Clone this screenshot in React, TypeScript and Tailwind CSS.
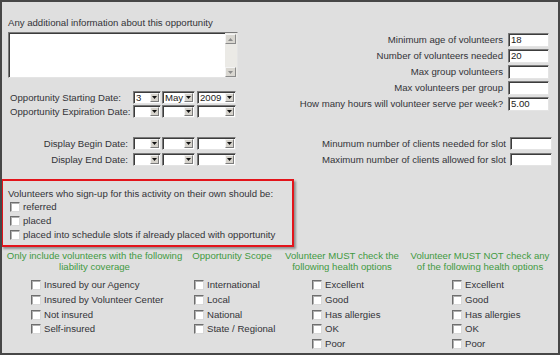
import React from "react";

function Check() {
  return (
    <span className="inline-block w-[10px] h-[10px] shrink-0 bg-white border border-t-[#6e6e6e] border-l-[#6e6e6e] border-r-[#d8d8d8] border-b-[#d8d8d8] shadow-[inset_1px_1px_0_#b0b0b0]" />
  );
}

function CheckRow({ label, tall }: { label: string; tall?: boolean }) {
  return (
    <div className={tall ? "flex items-center h-[14.7px]" : "flex items-center h-[14px]"}>
      <Check />
      <span className="ml-[3px] whitespace-nowrap">{label}</span>
    </div>
  );
}

function TextInput({ value, cls }: { value?: string; cls: string }) {
  return (
    <div
      className={`${cls} bg-white border border-t-[#7a7a7a] border-l-[#7a7a7a] border-r-[#e4e4e4] border-b-[#e4e4e4] shadow-[inset_1px_1px_0_#3c3c3c] pl-[2px] flex items-center text-[#222] leading-none`}
    >
      {value}
    </div>
  );
}

function Arrow({ up }: { up?: boolean }) {
  return (
    <svg width="5" height="3" viewBox="0 0 5 3">
      {up ? <polygon points="0,3 5,3 2.5,0" fill="currentColor" /> : <polygon points="0,0 5,0 2.5,3" fill="currentColor" />}
    </svg>
  );
}

function Select({ value, cls }: { value?: string; cls: string }) {
  return (
    <div
      className={`${cls} h-[13px] bg-white border border-t-[#7a7a7a] border-l-[#7a7a7a] border-r-[#e4e4e4] border-b-[#e4e4e4] shadow-[inset_1px_1px_0_#3c3c3c] flex items-center justify-between pl-[2px] pr-[1px]`}
    >
      <span className="leading-none text-[#222]">{value}</span>
      <span className="w-[9px] h-[9px] bg-[#d6d3cc] border border-t-[#f4f4f4] border-l-[#f4f4f4] border-r-[#7c7c7c] border-b-[#7c7c7c] flex items-center justify-center text-[#111]">
        <Arrow />
      </span>
    </div>
  );
}

export default function App() {
  return (
    <div className="w-[560px] h-[355px] border-2 border-[#474747] bg-[#dfdfdf] text-[9.6px] leading-[12px] text-[#333338] overflow-hidden font-['Liberation_Sans',Arial,sans-serif]">
      {/* top area */}
      <div className="flex">
        {/* left column */}
        <div className="w-[236px] pl-[6px] pt-[15px] flex flex-col">
          <div className="h-[12px] whitespace-nowrap">Any additional information about this opportunity</div>
          <div className="mt-[3px] w-[230px] h-[46px] bg-white border border-t-[#7a7a7a] border-l-[#7a7a7a] border-r-[#e4e4e4] border-b-[#e4e4e4] shadow-[inset_1px_1px_0_#3c3c3c] flex justify-end">
            <div className="w-[12px] h-full bg-[#ebeae6] flex flex-col justify-between pt-[1px]">
              <span className="w-[11px] h-[10px] bg-[#d9d7d1] border border-t-[#f4f4f4] border-l-[#f4f4f4] border-r-[#8a8a8a] border-b-[#8a8a8a] flex items-center justify-center text-[#8c8c8c]">
                <Arrow up />
              </span>
              <span className="w-[11px] h-[10px] bg-[#d9d7d1] border border-t-[#f4f4f4] border-l-[#f4f4f4] border-r-[#8a8a8a] border-b-[#8a8a8a] flex items-center justify-center text-[#8c8c8c]">
                <Arrow />
              </span>
            </div>
          </div>

          <div className="mt-[13px] flex flex-col gap-[1px]">
            <div className="flex items-center h-[13px]">
              <span className="w-[125px] pl-[2px] whitespace-nowrap">Opportunity Starting Date:</span>
              <Select value="3" cls="w-[28px]" />
              <Select value="May" cls="w-[33px] ml-[1px]" />
              <Select value="2009" cls="w-[39px] ml-[2px]" />
            </div>
            <div className="flex items-center h-[13px]">
              <span className="w-[125px] pl-[2px] whitespace-nowrap">Opportunity Expiration Date:</span>
              <Select cls="w-[28px]" />
              <Select cls="w-[33px] ml-[1px]" />
              <Select cls="w-[39px] ml-[2px]" />
            </div>
          </div>

          <div className="mt-[19px] flex flex-col gap-[3px]">
            <div className="flex items-center h-[13px]">
              <span className="w-[125px] pr-[5px] text-right whitespace-nowrap">Display Begin Date:</span>
              <Select cls="w-[28px]" />
              <Select cls="w-[33px] ml-[1px]" />
              <Select cls="w-[39px] ml-[2px]" />
            </div>
            <div className="flex items-center h-[13px]">
              <span className="w-[125px] pr-[5px] text-right whitespace-nowrap">Display End Date:</span>
              <Select cls="w-[28px]" />
              <Select cls="w-[33px] ml-[1px]" />
              <Select cls="w-[39px] ml-[2px]" />
            </div>
          </div>
        </div>

        {/* right column */}
        <div className="flex-1 flex flex-col items-end pt-[31px] pr-[9px]">
          <div className="flex flex-col items-end gap-[2px]">
            <div className="flex items-center h-[14px]">
              <span className="whitespace-nowrap">Minimum age of volunteers</span>
              <TextInput value="18" cls="ml-[5px] w-[41px] h-[14px]" />
            </div>
            <div className="flex items-center h-[14px]">
              <span className="whitespace-nowrap">Number of volunteers needed</span>
              <TextInput value="20" cls="ml-[5px] w-[41px] h-[14px]" />
            </div>
            <div className="flex items-center h-[14px]">
              <span className="whitespace-nowrap">Max group volunteers</span>
              <TextInput cls="ml-[5px] w-[41px] h-[14px]" />
            </div>
            <div className="flex items-center h-[14px]">
              <span className="whitespace-nowrap">Max volunteers per group</span>
              <TextInput cls="ml-[5px] w-[41px] h-[14px]" />
            </div>
            <div className="flex items-center h-[14px]">
              <span className="whitespace-nowrap">How many hours will volunteer serve per week?</span>
              <TextInput value="5.00" cls="ml-[5px] w-[41px] h-[14px]" />
            </div>
          </div>
          <div className="mt-[26px] mr-[-3px] flex flex-col items-end gap-[3px]">
            <div className="flex items-center h-[13px]">
              <span className="whitespace-nowrap">Minumum number of clients needed for slot</span>
              <TextInput cls="ml-[4px] w-[42px] h-[13px]" />
            </div>
            <div className="flex items-center h-[13px]">
              <span className="whitespace-nowrap">Maximum number of clients allowed for slot</span>
              <TextInput cls="ml-[4px] w-[42px] h-[13px]" />
            </div>
          </div>
        </div>
      </div>

      {/* red highlighted box */}
      <div className="mt-[13px] ml-[-1px] w-[293px] h-[68px] border-2 border-[#e3141b] shadow-[2px_2px_2px_rgba(0,0,0,0.35)] pl-[5px] pt-[7px]">
        <div className="h-[12px] whitespace-nowrap">Volunteers who sign-up for this activity on their own should be:</div>
        <div className="pl-[2px] flex flex-col">
          <CheckRow label="referred" />
          <CheckRow label="placed" />
          <CheckRow label="placed into schedule slots if already placed with opportunity" />
        </div>
      </div>

      {/* bottom filters */}
      <div className="mt-[3px] grid grid-cols-[185px_90px_130px_146px]">
        <div>
          <div className="text-center text-[#3f9a3f] leading-[11px] h-[22px]">
            Only include volunteers with the following
            <br />
            liability coverage
          </div>
          <div className="mt-[6px] pl-[29px] flex flex-col">
            <CheckRow tall label="Insured by our Agency" />
            <CheckRow tall label="Insured by Volunteer Center" />
            <CheckRow tall label="Not insured" />
            <CheckRow tall label="Self-insured" />
          </div>
        </div>
        <div>
          <div className="text-center text-[#3f9a3f] leading-[11px] h-[22px] whitespace-nowrap">Opportunity Scope</div>
          <div className="mt-[6px] pl-[7px] flex flex-col">
            <CheckRow tall label="International" />
            <CheckRow tall label="Local" />
            <CheckRow tall label="National" />
            <CheckRow tall label="State / Regional" />
          </div>
        </div>
        <div>
          <div className="text-center text-[#3f9a3f] leading-[11px] h-[22px] whitespace-nowrap">
            Volunteer MUST check the
            <br />
            following health options
          </div>
          <div className="mt-[6px] pl-[35px] flex flex-col">
            <CheckRow tall label="Excellent" />
            <CheckRow tall label="Good" />
            <CheckRow tall label="Has allergies" />
            <CheckRow tall label="OK" />
            <CheckRow tall label="Poor" />
          </div>
        </div>
        <div>
          <div className="text-center text-[#3f9a3f] leading-[11px] h-[22px] whitespace-nowrap">
            Volunteer MUST NOT check any
            <br />
            of the following health options
          </div>
          <div className="mt-[6px] pl-[45px] flex flex-col">
            <CheckRow tall label="Excellent" />
            <CheckRow tall label="Good" />
            <CheckRow tall label="Has allergies" />
            <CheckRow tall label="OK" />
            <CheckRow tall label="Poor" />
          </div>
        </div>
      </div>
    </div>
  );
}
